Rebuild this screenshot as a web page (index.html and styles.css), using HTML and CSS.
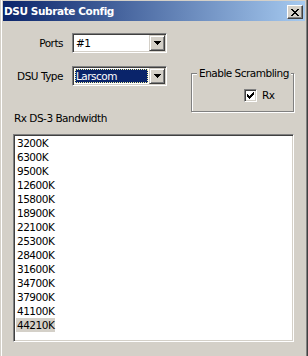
FILE: index.html
```html
<!DOCTYPE html>
<html>
<head>
<meta charset="utf-8">
<link rel="stylesheet" href="styles.css">
</head>
<body>
<div class="window">
  <div class="titlebar">
    <span class="title">DSU Subrate Config</span>
    <span class="close"><svg width="8" height="7" viewBox="0 0 8 7" shape-rendering="crispEdges"><path d="M0 0h2v1H0zM6 0h2v1H6zM1 1h2v1H1zM5 1h2v1H5zM2 2h4v1H2zM3 3h2v1H3zM2 4h4v1H2zM1 5h2v1H1zM5 5h2v1H5zM0 6h2v1H0zM6 6h2v1H6z" fill="#000"/></svg></span>
  </div>
  <div class="content">
    <div class="top">
      <div class="fields">
        <span class="lbl">Ports</span>
        <div class="combo">
          <span class="value">#1</span>
          <span class="dropbtn"><svg width="7" height="4" viewBox="0 0 7 4" shape-rendering="crispEdges"><path d="M0 0h7v1H0zM1 1h5v1H1zM2 2h3v1H2zM3 3h1v1H3z" fill="#000"/></svg></span>
        </div>
        <span class="lbl">DSU Type</span>
        <div class="combo">
          <span class="value sel">Larscom</span>
          <span class="dropbtn"><svg width="7" height="4" viewBox="0 0 7 4" shape-rendering="crispEdges"><path d="M0 0h7v1H0zM1 1h5v1H1zM2 2h3v1H2zM3 3h1v1H3z" fill="#000"/></svg></span>
        </div>
      </div>
      <fieldset class="group">
        <legend>Enable Scrambling</legend>
        <div class="checkrow">
          <span class="checkbox"><svg width="7" height="7" viewBox="0 0 7 7" shape-rendering="crispEdges"><path d="M6 0h1v1H6zM5 1h2v1H5zM0 2h1v1H0zM4 2h3v1H4zM0 3h2v1H0zM3 3h3v1H3zM0 4h5v1H0zM1 5h3v1H1zM2 6h1v1H2z" fill="#000"/></svg></span>
          <span>Rx</span>
        </div>
      </fieldset>
    </div>
    <div class="list-label">Rx DS-3 Bandwidth</div>
    <div class="listbox">
      <div class="item"><span>3200K</span></div>
      <div class="item"><span>6300K</span></div>
      <div class="item"><span>9500K</span></div>
      <div class="item"><span>12600K</span></div>
      <div class="item"><span>15800K</span></div>
      <div class="item"><span>18900K</span></div>
      <div class="item"><span>22100K</span></div>
      <div class="item"><span>25300K</span></div>
      <div class="item"><span>28400K</span></div>
      <div class="item"><span>31600K</span></div>
      <div class="item"><span>34700K</span></div>
      <div class="item"><span>37900K</span></div>
      <div class="item"><span>41100K</span></div>
      <div class="item selected"><span>44210K</span></div>
    </div>
  </div>
</div>
</body>
</html>
```

FILE: styles.css
```css
* { box-sizing: border-box; }
html, body { margin: 0; padding: 0; }
body {
  width: 308px;
  height: 356px;
  overflow: hidden;
  background: #d4d0c8;
  font-family: "DejaVu Sans", sans-serif;
  font-size: 10.5px;
  line-height: 13px;
  letter-spacing: -0.5px;
  color: #000;
}
.window {
  width: 308px;
  height: 356px;
  background: #d4d0c8;
  padding: 1px 3px 0 3px;
  display: flex;
  flex-direction: column;
  box-shadow: inset 1px 0 #d4d0c8, inset 2px 0 #fff, inset -1px 0 #404040, inset -2px 0 #808080;
}
.titlebar {
  height: 20px;
  display: flex;
  align-items: flex-start;
  justify-content: space-between;
  background: linear-gradient(to right, #0a246a, #a6caf0);
  color: #fff;
}
.title {
  font-weight: bold;
  font-size: 10.5px;
  letter-spacing: -0.4px;
  line-height: 20px;
  padding-left: 1px;
}
.close {
  width: 16px;
  height: 14px;
  margin: 4px 2px 0 0;
  background: #d4d0c8;
  border: 1px solid;
  border-color: #fff #404040 #404040 #fff;
  box-shadow: inset -1px -1px #808080;
  display: flex;
  align-items: center;
  justify-content: center;
}
.close svg { display: block; margin-left: -1px; }
.content {
  flex: 1;
  padding: 12px 11px 0 10px;
  display: flex;
  flex-direction: column;
}
.top {
  display: flex;
  align-items: flex-start;
}
.fields {
  display: grid;
  grid-template-columns: 50px 95px;
  column-gap: 9px;
  row-gap: 13px;
  align-items: center;
}
.lbl { text-align: right; }
.combo {
  height: 20px;
  display: flex;
  background: #fff;
  border: 1px solid;
  border-color: #808080 #fff #fff #808080;
  box-shadow: inset 1px 1px #404040, inset -1px -1px #d4d0c8;
  padding: 1px;
}
.value {
  flex: 1;
  line-height: 16px;
  padding-left: 2px;
}
.value.sel {
  margin: 1px;
  line-height: 14px;
  padding-left: 1px;
  background: #0a246a;
  color: #fff;
  outline: 1px dotted #f4f0a0;
  outline-offset: -1px;
}
.dropbtn {
  width: 16px;
  height: 16px;
  background: #d4d0c8;
  border: 1px solid;
  border-color: #d4d0c8 #404040 #404040 #d4d0c8;
  box-shadow: inset 1px 1px #fff, inset -1px -1px #808080;
  display: flex;
  align-items: center;
  justify-content: center;
}
.dropbtn svg { display: block; }
.group {
  margin: 34px 0 0 24px;
  padding: 0;
  width: 103px;
  height: 45px;
  min-inline-size: 0;
  border: 1px solid #808080;
  box-shadow: inset 1px 1px #fff, 1px 1px #fff;
}
.group legend {
  margin-left: 5px;
  padding: 0 2px;
  line-height: 13px;
  background: #d4d0c8;
}
.checkrow {
  margin-top: 9px;
  padding-left: 52px;
  display: flex;
  align-items: center;
  gap: 5px;
}
.checkbox {
  width: 13px;
  height: 13px;
  background: #fff;
  border: 1px solid;
  border-color: #808080 #fff #fff #808080;
  box-shadow: inset 1px 1px #404040, inset -1px -1px #d4d0c8;
  display: flex;
  align-items: center;
  justify-content: center;
}
.checkbox svg { display: block; }
.list-label {
  margin-top: 0;
  margin-bottom: 9px;
  padding-left: 1px;
}
.listbox {
  height: 208px;
  background: #fff;
  border: 1px solid;
  border-color: #808080 #fff #fff #808080;
  box-shadow: inset 1px 1px #404040, inset -1px -1px #d4d0c8;
  padding: 1px 1px 1px 2px;
}
.item {
  line-height: 14px;
  height: 14px;
}
.item span { padding: 0 1px; display: inline-block; }
.item.selected span { background: #d4d0c8; }
```
